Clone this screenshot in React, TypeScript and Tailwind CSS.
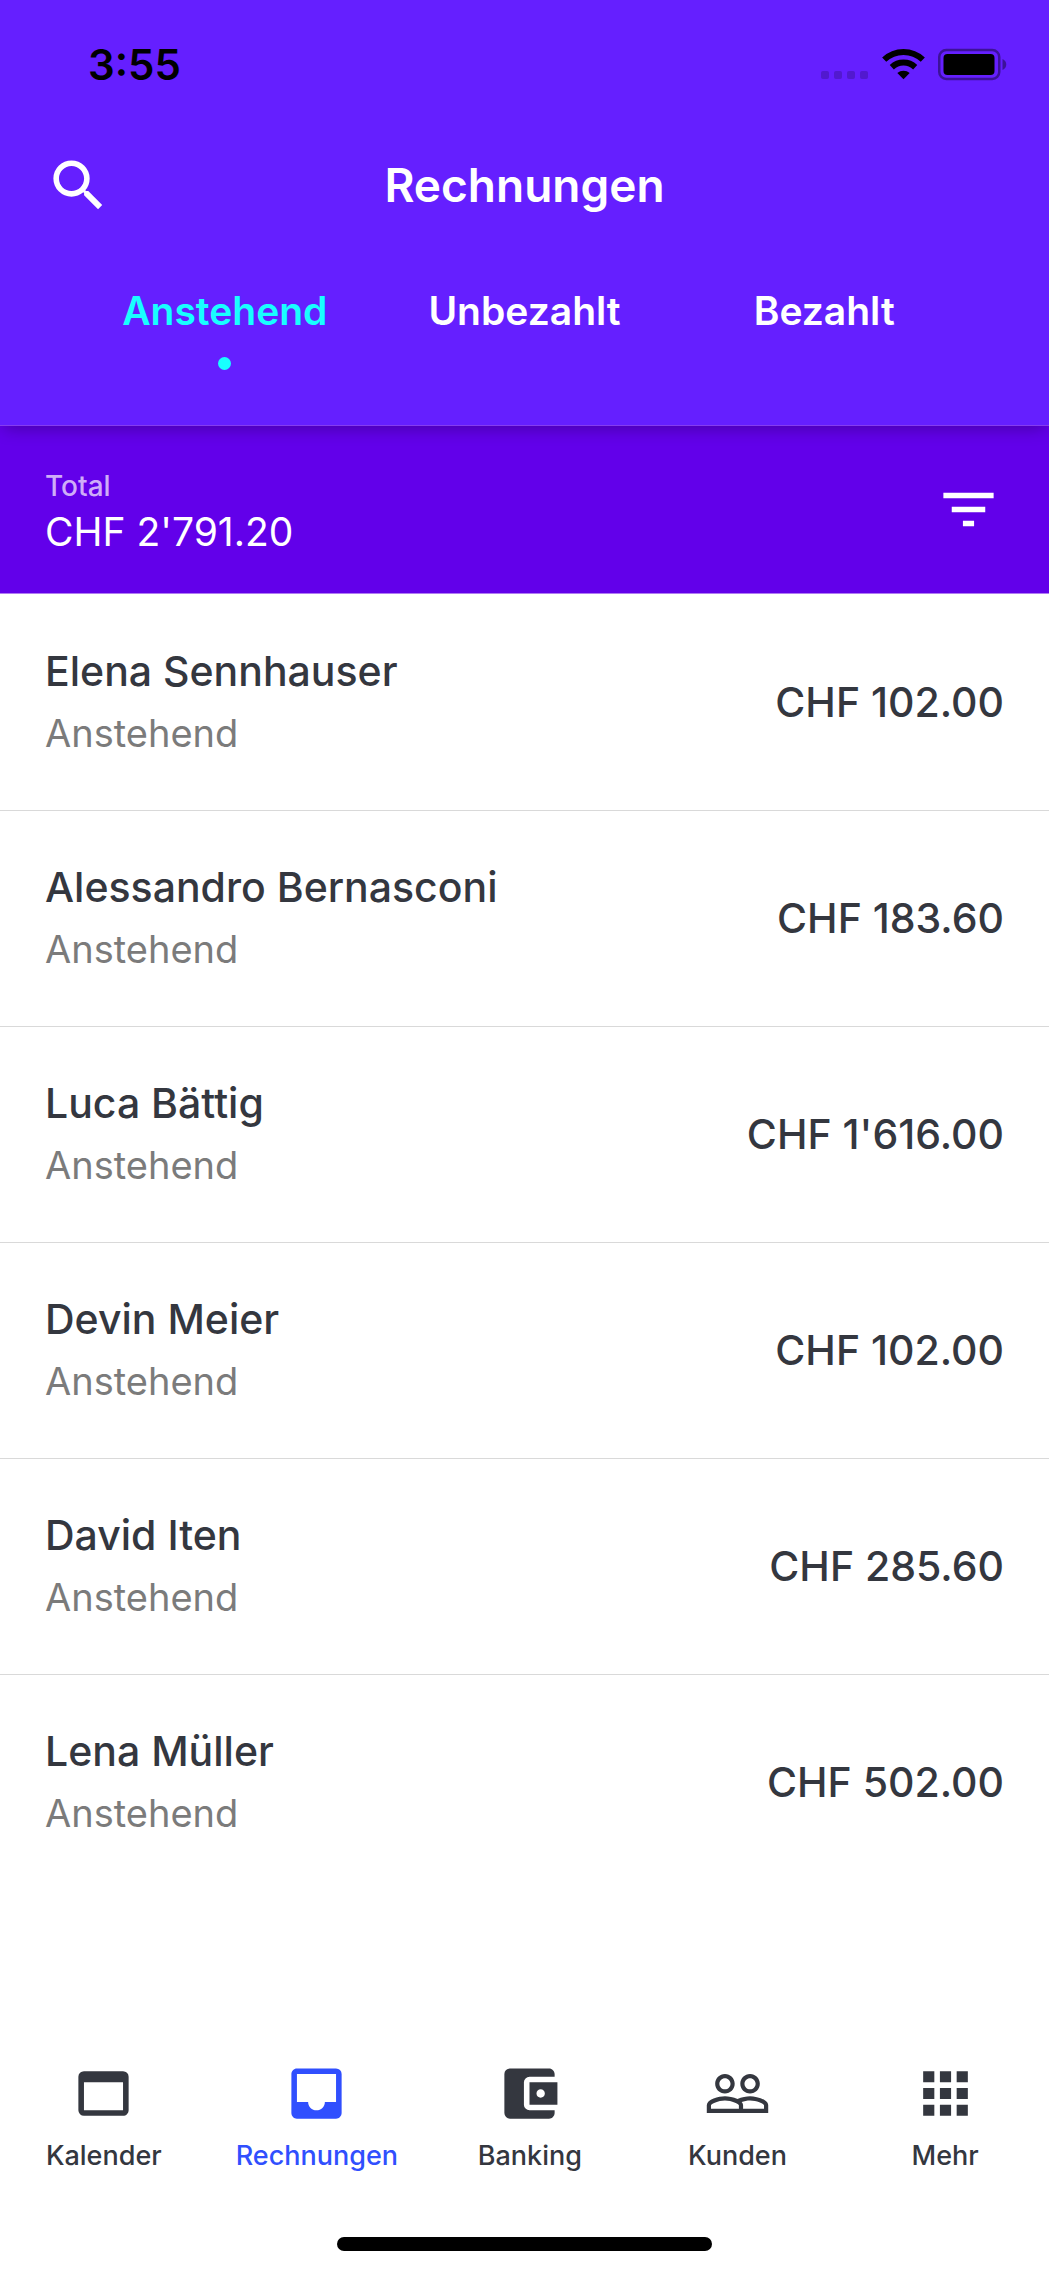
import React, { useState } from 'react';
import type { IconType } from 'react-icons';
import {
  MdAccountBalanceWallet,
  MdApps,
  MdFilterList,
  MdInbox,
  MdPeopleOutline,
  MdSearch,
  MdWebAsset,
} from 'react-icons/md';

interface Invoice {
  name: string;
  status: string;
  amount: string;
}

const tabs = ['Anstehend', 'Unbezahlt', 'Bezahlt'];

const invoices: Invoice[] = [
  { name: 'Elena Sennhauser', status: 'Anstehend', amount: "CHF 102.00" },
  { name: 'Alessandro Bernasconi', status: 'Anstehend', amount: "CHF 183.60" },
  { name: 'Luca Bättig', status: 'Anstehend', amount: "CHF 1'616.00" },
  { name: 'Devin Meier', status: 'Anstehend', amount: "CHF 102.00" },
  { name: 'David Iten', status: 'Anstehend', amount: "CHF 285.60" },
  { name: 'Lena Müller', status: 'Anstehend', amount: "CHF 502.00" },
];

const navItems: { label: string; icon: IconType }[] = [
  { label: 'Kalender', icon: MdWebAsset },
  { label: 'Rechnungen', icon: MdInbox },
  { label: 'Banking', icon: MdAccountBalanceWallet },
  { label: 'Kunden', icon: MdPeopleOutline },
  { label: 'Mehr', icon: MdApps },
];

const StatusBar: React.FC = () => (
  <div className="flex h-[130px] items-center justify-between pl-[88px] pr-[42px]">
    <span className="text-[42px] font-semibold leading-none text-black">3:55</span>
    <svg width="187" height="34" viewBox="0 0 187 34" aria-hidden="true">
      {/* no signal dots */}
      <g fill="#5219cf">
        <rect x="1" y="23" width="8" height="8" rx="2" />
        <rect x="14" y="23" width="8" height="8" rx="2" />
        <rect x="27" y="23" width="8" height="8" rx="2" />
        <rect x="40" y="23" width="8" height="8" rx="2" />
      </g>
      {/* wifi */}
      <g fill="none" stroke="#000" strokeWidth="6">
        <path d="M64.2 11.6a28 28 0 0 1 38.6 0" />
        <path d="M71.8 19.2a17 17 0 0 1 23.4 0" />
      </g>
      <path d="M77.3 25a9.5 9.5 0 0 1 12.4 0l-6.2 6.3z" />
      {/* battery */}
      <rect x="119.25" y="2" width="60" height="29" rx="7" fill="none" stroke="#000" strokeOpacity="0.4" strokeWidth="2.5" />
      <rect x="123.5" y="6" width="51" height="21" rx="4" />
      <path d="M182.5 11c5 2 5 9 0 11z" fillOpacity="0.4" />
    </svg>
  </div>
);

const InvoiceRow: React.FC<{ invoice: Invoice }> = ({ invoice }) => (
  <li className="flex h-[216px] items-center justify-between border-b border-[#d9d9d9] px-[45px] pb-0.5 last:border-b-0">
    <div className="flex flex-col">
      <span className="text-[41px] font-medium leading-[62px] text-[#34373f]">{invoice.name}</span>
      <span className="text-[38px] leading-[62px] text-[#7b7b7b]">{invoice.status}</span>
    </div>
    <span className="text-[41px] font-medium leading-[62px] text-[#34373f]">{invoice.amount}</span>
  </li>
);

const App: React.FC = () => {
  const [activeTab, setActiveTab] = useState('Anstehend');
  const [activeNav, setActiveNav] = useState('Rechnungen');

  return (
    <div className="flex min-h-screen flex-col bg-white font-['Inter',sans-serif]">
      <header className="relative z-10 border-b border-[#853cf0] bg-[#651fff] shadow-[0_6px_16px_-4px_rgba(0,0,0,0.3)]">
        <StatusBar />
        <div className="grid h-[110px] grid-cols-[67px_1fr_67px] items-center px-[45px]">
          <button aria-label="Suchen" className="text-white">
            <MdSearch size={67} />
          </button>
          <h1 className="text-center text-[46px] font-semibold leading-none text-white">Rechnungen</h1>
        </div>
        <div role="tablist" className="flex h-[185px] px-[75px] pt-[41px]">
          {tabs.map(tab => (
            <button
              key={tab}
              role="tab"
              aria-selected={activeTab === tab}
              onClick={() => setActiveTab(tab)}
              className={`flex flex-1 flex-col items-center gap-4 text-[39px] font-semibold leading-[60px] ${
                activeTab === tab ? 'text-[#18ffff]' : 'text-white'
              }`}
            >
              {tab}
              {activeTab === tab && <span className="size-[13px] rounded-full bg-[#18ffff]" />}
            </button>
          ))}
        </div>
      </header>

      <section className="flex h-[168px] items-center justify-between border-b border-[#b07bf3] bg-[#6200ea] pl-[45px] pr-[47px]">
        <div className="flex flex-col pb-0.5">
          <span className="text-[28px] font-medium leading-[46px] text-[#cfadf8]">Total</span>
          <span className="text-[39px] leading-[46px] text-white">CHF 2'791.20</span>
        </div>
        <button aria-label="Filtern" className="text-white">
          <MdFilterList size={67} />
        </button>
      </section>

      <main className="flex-1">
        <ul className="pt-px">
          {invoices.map(invoice => (
            <InvoiceRow key={invoice.name} invoice={invoice} />
          ))}
        </ul>
      </main>

      <nav className="flex">
        {navItems.map(({ label, icon: Icon }) => (
          <button
            key={label}
            onClick={() => setActiveNav(label)}
            className={`flex flex-1 flex-col items-center gap-2 px-7 text-[27px] font-medium leading-[42px] ${
              activeNav === label ? 'text-[#304ffe]' : 'text-[#34373f]'
            }`}
          >
            <Icon size={67} />
            {label}
          </button>
        ))}
      </nav>
      <div className="flex justify-center pb-[22px] pt-[60px]">
        <div className="h-3.5 w-[375px] rounded-full bg-black" />
      </div>
    </div>
  );
};

export default App;
